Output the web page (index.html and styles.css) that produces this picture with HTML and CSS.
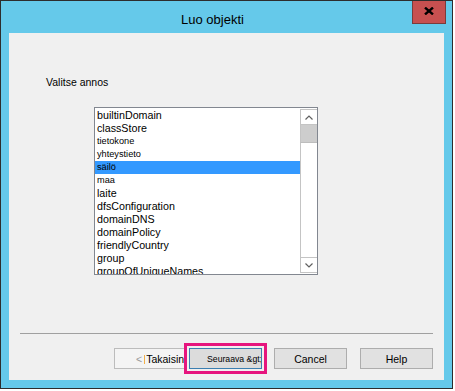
FILE: index.html
```html
<!DOCTYPE html>
<html>
<head>
<meta charset="utf-8">
<link rel="stylesheet" href="styles.css">
</head>
<body>
<div class="window">
  <div class="titlebar">
    <span class="title">Luo objekti</span>
    <div class="close">
      <svg width="10" height="8" viewBox="0 0 10 8"><path d="M1 0.6 L9 7.4 M9 0.6 L1 7.4" stroke="#000" stroke-width="2.4" fill="none"/></svg>
    </div>
  </div>
  <div class="client">
    <div class="label">Valitse annos</div>
    <div class="listbox">
      <ul class="items">
        <li>builtinDomain</li>
        <li>classStore</li>
        <li class="sm">tietokone</li>
        <li class="sm">yhteystieto</li>
        <li class="sm sel">säilö</li>
        <li class="sm">maa</li>
        <li>laite</li>
        <li>dfsConfiguration</li>
        <li>domainDNS</li>
        <li>domainPolicy</li>
        <li>friendlyCountry</li>
        <li>group</li>
        <li>groupOfUniqueNames</li>
      </ul>
      <div class="scrollbar">
        <div class="sb-btn sb-up"><svg width="8" height="5" viewBox="0 0 8 5"><path d="M0.5 4.5 L4 1 L7.5 4.5" stroke="#606060" stroke-width="1.2" fill="none"/></svg></div>
        <div class="sb-thumb"></div>
        <div class="sb-track"></div>
        <div class="sb-btn sb-down"><svg width="8" height="5" viewBox="0 0 8 5"><path d="M0.5 0.5 L4 4 L7.5 0.5" stroke="#606060" stroke-width="1.2" fill="none"/></svg></div>
      </div>
    </div>
    <div class="separator"></div>
    <div class="buttons">
      <button class="btn btn-disabled"><span class="dim">&lt;</span><span class="caret"></span>Takaisin</button>
      <div class="highlight"><button class="btn btn-default">Seuraava &amp;gt;</button></div>
      <button class="btn btn-cancel">Cancel</button>
      <button class="btn">Help</button>
    </div>
  </div>
</div>
</body>
</html>
```

FILE: styles.css
```css
html, body {
  margin: 0;
  padding: 0;
  background: #ffffff;
}

.window {
  width: 453px;
  height: 389px;
  box-sizing: border-box;
  border: 1px solid #2d2d2d;
  background: #65c9ea;
  display: flex;
  flex-direction: column;
  font-family: "Liberation Sans", Arial, sans-serif;
}

.titlebar {
  height: 32px;
  display: flex;
  align-items: flex-start;
}

.title {
  margin-left: 180px;
  padding-top: 12px;
  font-size: 13px;
  line-height: 1;
  color: #000;
}

.close {
  margin-left: auto;
  margin-right: 6px;
  width: 34px;
  height: 23px;
  box-sizing: border-box;
  background: #c75050;
  border: 1px solid #7b3b3b;
  border-top: none;
  display: flex;
  align-items: center;
  justify-content: center;
  padding-bottom: 2px;
}

.client {
  margin: 0 8px;
  height: 347px;
  background: #f0f0f0;
  display: flex;
  flex-direction: column;
}

.label {
  margin: 43px 0 0 37px;
  font-size: 10.5px;
  line-height: 12px;
  color: #000;
}

.listbox {
  margin: 19px 0 0 85px;
  width: 224px;
  height: 168px;
  box-sizing: border-box;
  border: 1px solid #828790;
  background: #fff;
  display: flex;
}

.items {
  list-style: none;
  margin: 0;
  padding: 1px 0 0;
  flex: 1;
  overflow: hidden;
}

.items li {
  height: 13px;
  line-height: 13px;
  padding-left: 2px;
  font-size: 10.7px;
  color: #000;
  white-space: nowrap;
}

.items li.sm {
  font-size: 9.2px;
}

.items li.sel {
  background: #3399ff;
}

.scrollbar {
  width: 17px;
  padding: 1px 0;
  box-sizing: border-box;
  display: flex;
  flex-direction: column;
}

.sb-btn {
  height: 16px;
  box-sizing: border-box;
  border: 1px solid #c4c4c4;
  border-right: none;
  display: flex;
  align-items: center;
  justify-content: center;
}

.sb-up {
  border-bottom: 1px solid #c4c4c4;
}

.sb-thumb {
  height: 18px;
  box-sizing: border-box;
  background: #cdcdcd;
  border-left: 1px solid #c4c4c4;
  border-bottom: 1px solid #bdbdbd;
}

.sb-track {
  flex: 1;
  border-left: 1px solid #c4c4c4;
}

.separator {
  margin: 58px 11px 0;
  height: 1px;
  background: #a0a0a0;
}

.buttons {
  margin-top: 14px;
  display: flex;
  align-items: flex-start;
  justify-content: flex-end;
  padding-right: 11px;
}

.btn {
  width: 73px;
  height: 21px;
  box-sizing: border-box;
  border: 1px solid #adadad;
  background: #e1e1e1;
  font-family: "Liberation Sans", Arial, sans-serif;
  font-size: 10.5px;
  color: #000;
  padding: 0;
  margin: 0;
  white-space: nowrap;
  overflow: hidden;
}

.btn-disabled {
  background: #f4f4f4;
  border-color: #bcbcbc;
  text-align: left;
  padding-left: 21px;
}

.dim {
  color: #9a9a9a;
}

.caret {
  display: inline-block;
  width: 1px;
  height: 9px;
  background: #f2b04a;
  margin: 0 1px 0 2px;
  vertical-align: -1px;
}

.highlight {
  margin: -5px 7px -5px -3px;
  border: 3px solid #e6157e;
  padding: 2px;
  display: flex;
}

.btn-default {
  background: #dcdcdc;
  border-color: #3c7fb1;
  font-size: 8.7px;
  text-align: left;
  padding-left: 17px;
}

.btn-cancel {
  margin-right: 13px;
}
```
